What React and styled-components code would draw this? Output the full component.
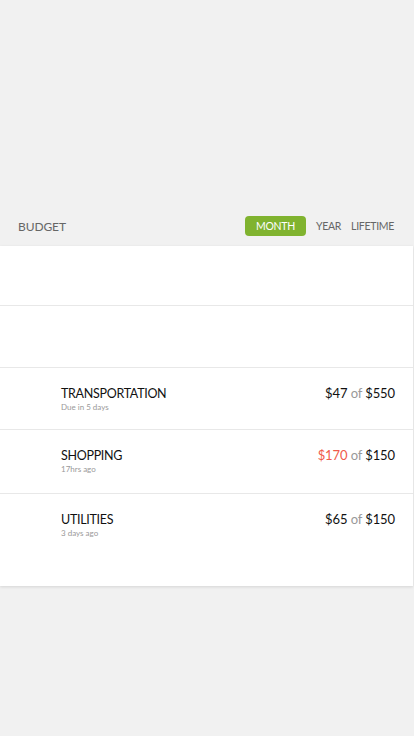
import React from 'react';
import styled, { createGlobalStyle } from 'styled-components';

const GlobalStyle = createGlobalStyle`
  html, body {
    margin: 0;
    padding: 0;
    background: #f1f1f1;
    font-family: "Lato", "Liberation Sans", sans-serif;
  }
`;

const Page = styled.div`
  min-height: 736px;
  padding-top: 206px;
  box-sizing: border-box;
`;

const Header = styled.div`
  height: 40px;
  display: flex;
  align-items: center;
  justify-content: space-between;
  padding: 0 20px 0 18px;
`;

const Title = styled.div`
  font-size: 12px;
  color: #666;
  letter-spacing: -0.1px;
`;

const Tabs = styled.div`
  display: flex;
  align-items: center;
  gap: 10px;
  margin-top: -1px;
`;

const Tab = styled.div`
  font-size: 10.5px;
  letter-spacing: -0.3px;
  color: ${p => (p.active ? '#fff' : '#666')};
  background: ${p => (p.active ? '#80b32f' : 'transparent')};
  border-radius: 4px;
  height: 20px;
  line-height: 20px;
  width: ${p => (p.active ? '61px' : 'auto')};
  text-align: center;
`;

const Card = styled.div`
  background: #fff;
  width: 413px;
  box-shadow: 0 1px 3px rgba(0, 0, 0, 0.12);
`;

const Row = styled.div`
  height: ${p => p.h}px;
  box-sizing: border-box;
  border-bottom: ${p => (p.last ? 'none' : '1px solid #e8e8e8')};
  display: flex;
  justify-content: space-between;
  align-items: flex-start;
  padding: 17px 18px 0 61px;
`;

const Info = styled.div`
  display: flex;
  flex-direction: column;
`;

const Name = styled.div`
  font-size: 12.5px;
  color: #111;
  letter-spacing: -0.3px;
  line-height: 17px;
`;

const Sub = styled.div`
  font-size: 8px;
  color: #999;
  line-height: 10px;
`;

const Amount = styled.div`
  font-size: 13px;
  color: #111;
  letter-spacing: -0.1px;
  line-height: 17px;
`;

const Spent = styled.span`
  color: ${p => (p.over ? '#f05a4a' : '#111')};
`;

const Of = styled.span`
  color: #999;
`;

const rows = [
  { h: 60 },
  { h: 62 },
  { h: 62, name: 'TRANSPORTATION', sub: 'Due in 5 days', spent: '$47', total: '$550' },
  { h: 64, name: 'SHOPPING', sub: '17hrs ago', spent: '$170', total: '$150', over: true },
  { h: 92, name: 'UTILITIES', sub: '3 days ago', spent: '$65', total: '$150', last: true },
];

const App = () => (
  <Page>
    <GlobalStyle />
    <Header>
      <Title>BUDGET</Title>
      <Tabs>
        <Tab active>MONTH</Tab>
        <Tab>YEAR</Tab>
        <Tab>LIFETIME</Tab>
      </Tabs>
    </Header>
    <Card>
      {rows.map((r, i) => (
        <Row key={i} h={r.h} last={r.last}>
          {r.name && (
            <>
              <Info>
                <Name>{r.name}</Name>
                <Sub>{r.sub}</Sub>
              </Info>
              <Amount>
                <Spent over={r.over}>{r.spent}</Spent> <Of>of</Of> {r.total}
              </Amount>
            </>
          )}
        </Row>
      ))}
    </Card>
  </Page>
);

export default App;
